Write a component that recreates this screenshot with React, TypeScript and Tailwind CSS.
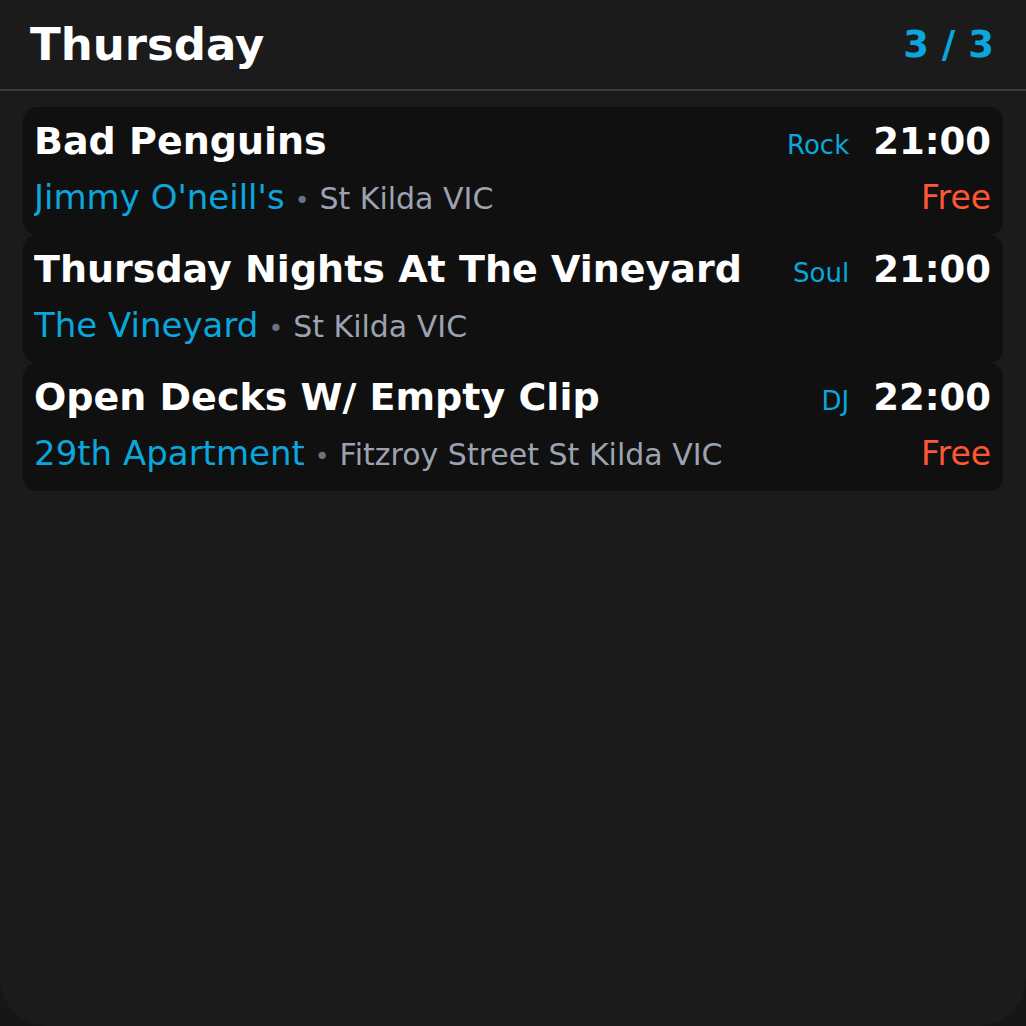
import React from 'react'

type Gig = {
  title: string
  venue: string
  location: string
  genre: string
  time: string
  free: boolean
}

const gigs: Gig[] = [
  { title: 'Bad Penguins', venue: "Jimmy O'neill's", location: 'St Kilda VIC', genre: 'Rock', time: '21:00', free: true },
  { title: 'Thursday Nights At The Vineyard', venue: 'The Vineyard', location: 'St Kilda VIC', genre: 'Soul', time: '21:00', free: false },
  { title: 'Open Decks W/ Empty Clip', venue: '29th Apartment', location: 'Fitzroy Street St Kilda VIC', genre: 'DJ', time: '22:00', free: true },
]

function GigCard({ gig }: { gig: Gig }) {
  return (
    <div className="h-[128px] rounded-[14px] bg-[#101010] pl-[11px] pr-[12px] pt-[12px]">
      {/* top row: title + genre/time */}
      <div className="flex items-baseline">
        <h3 className="flex-1 truncate text-[38px] font-bold leading-[44px] text-white">{gig.title}</h3>
        <span className="ml-4 text-[26px] leading-[44px] text-[#0ba6dc]">{gig.genre}</span>
        <span className="ml-[24px] text-[37px] font-bold leading-[44px] text-white">{gig.time}</span>
      </div>
      {/* bottom row: venue + location / price */}
      <div className="mt-[6px] flex items-baseline">
        <div className="flex-1 truncate leading-[48px]">
          <span className="text-[34px] text-[#0ba6dc]">{gig.venue}</span>
          <span className="mx-[10px] text-[25px] text-[#6b7280]">•</span>
          <span className="text-[30px] text-[#9ca3af]">{gig.location}</span>
        </div>
        {gig.free && <span className="text-[33px] leading-[48px] text-[#ff5733]">Free</span>}
      </div>
    </div>
  )
}

export default function App() {
  return (
    <div className="h-[1026px] w-[1026px] bg-[#161616] font-['DejaVu_Sans',sans-serif]">
      <div className="flex h-full flex-col rounded-b-[48px] bg-[#1b1b1b]">
        <header className="flex h-[89px] items-center justify-between pl-[30px] pr-[32px]">
          <h1 className="text-[45px] font-bold text-white">Thursday</h1>
          <span className="text-[37px] font-bold text-[#0ba6dc]">3 / 3</span>
        </header>
        <div className="h-[2px] bg-[#363b46]" />
        <div className="flex flex-col px-[23px] pt-[16px]">
          {gigs.map((gig) => (
            <GigCard key={gig.title} gig={gig} />
          ))}
        </div>
      </div>
    </div>
  )
}
